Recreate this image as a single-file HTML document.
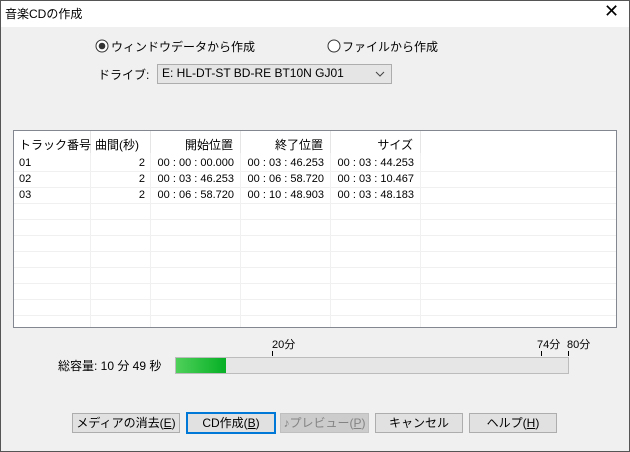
<!DOCTYPE html><html><head><style>
body{margin:0;width:630px;height:452px;background:#f0f0f0;font-family:"Liberation Sans","Noto Sans CJK JP",sans-serif;font-size:12px;color:#000;position:relative;overflow:hidden}
.a{position:absolute;white-space:nowrap}
.btn{position:absolute;top:413px;height:18px;border:1px solid #adadad;background:#e1e1e1;text-align:center;line-height:18px}
.cell{position:absolute;height:16px;line-height:16px}
</style></head><body>
<div class="a" style="left:0;top:0;width:628px;height:26px;background:#fff;border:1px solid #555;border-bottom:none"></div>
<div class="a" style="left:0;top:26px;width:1px;height:426px;background:#555"></div>
<div class="a" style="right:0;top:26px;width:1px;height:426px;background:#555"></div>
<div class="a" style="left:0;bottom:0;width:630px;height:1px;background:#555"></div>
<div class="a" style="left:5px;top:5px">音楽CDの作成</div>
<div class="a" style="left:604px;top:1px;font-size:18px">✕</div>
<svg class="a" style="left:95px;top:39px" width="14" height="14"><circle cx="7" cy="7" r="6" fill="#fff" stroke="#333"/><circle cx="7" cy="7" r="3.3" fill="#333"/></svg>
<div class="a" style="left:111px;top:38px">ウィンドウデータから作成</div>
<svg class="a" style="left:327px;top:39px" width="14" height="14"><circle cx="7" cy="7" r="6" fill="#fff" stroke="#333"/></svg>
<div class="a" style="left:342px;top:38px">ファイルから作成</div>
<div class="a" style="left:98px;top:66px">ドライブ:</div>
<div class="a" style="left:157px;top:64px;width:233px;height:18px;border:1px solid #adadad;background:#e5e5e5"></div>
<div class="a" style="left:162px;top:66px">E: HL-DT-ST BD-RE BT10N GJ01</div>
<svg class="a" style="left:375px;top:71px" width="10" height="6"><path d="M1 1L5 5L9 1" fill="none" stroke="#444"/></svg>
<div class="a" style="left:13px;top:130px;width:602px;height:196px;border:1px solid #828790;background:#fff"></div>
<svg class="a" style="left:14px;top:131px" width="602" height="196">
<g stroke="#f0f0f0"><line x1="76.5" y1="0" x2="76.5" y2="196"/><line x1="136.5" y1="0" x2="136.5" y2="196"/><line x1="226.5" y1="0" x2="226.5" y2="196"/><line x1="316.5" y1="0" x2="316.5" y2="196"/><line x1="406.5" y1="0" x2="406.5" y2="196"/>
<line x1="0" y1="40.5" x2="602" y2="40.5"/><line x1="0" y1="56.5" x2="602" y2="56.5"/><line x1="0" y1="72.5" x2="602" y2="72.5"/><line x1="0" y1="88.5" x2="602" y2="88.5"/><line x1="0" y1="104.5" x2="602" y2="104.5"/><line x1="0" y1="120.5" x2="602" y2="120.5"/><line x1="0" y1="136.5" x2="602" y2="136.5"/><line x1="0" y1="152.5" x2="602" y2="152.5"/><line x1="0" y1="168.5" x2="602" y2="168.5"/><line x1="0" y1="184.5" x2="602" y2="184.5"/></g>
<g stroke="#e5e5e5"><line x1="76.5" y1="0" x2="76.5" y2="22"/><line x1="136.5" y1="0" x2="136.5" y2="22"/><line x1="226.5" y1="0" x2="226.5" y2="22"/><line x1="316.5" y1="0" x2="316.5" y2="22"/><line x1="406.5" y1="0" x2="406.5" y2="22"/></g>
</svg>
<div class="a" style="left:19px;top:136px">トラック番号</div>
<div class="a" style="left:95px;top:136px">曲間(秒)</div>
<div class="a" style="left:150px;top:136px;width:83px;text-align:right">開始位置</div>
<div class="a" style="left:240px;top:136px;width:83px;text-align:right">終了位置</div>
<div class="a" style="left:330px;top:136px;width:83px;text-align:right">サイズ</div>
<div style="font-size:11px">
<div class="cell a" style="left:19px;top:155px">01</div><div class="cell a" style="left:90px;top:155px;width:55px;text-align:right">2</div><div class="cell a" style="left:150px;top:155px;width:84px;text-align:right">00 : 00 : 00.000</div><div class="cell a" style="left:240px;top:155px;width:84px;text-align:right">00 : 03 : 46.253</div><div class="cell a" style="left:330px;top:155px;width:84px;text-align:right">00 : 03 : 44.253</div>
<div class="cell a" style="left:19px;top:171px">02</div><div class="cell a" style="left:90px;top:171px;width:55px;text-align:right">2</div><div class="cell a" style="left:150px;top:171px;width:84px;text-align:right">00 : 03 : 46.253</div><div class="cell a" style="left:240px;top:171px;width:84px;text-align:right">00 : 06 : 58.720</div><div class="cell a" style="left:330px;top:171px;width:84px;text-align:right">00 : 03 : 10.467</div>
<div class="cell a" style="left:19px;top:187px">03</div><div class="cell a" style="left:90px;top:187px;width:55px;text-align:right">2</div><div class="cell a" style="left:150px;top:187px;width:84px;text-align:right">00 : 06 : 58.720</div><div class="cell a" style="left:240px;top:187px;width:84px;text-align:right">00 : 10 : 48.903</div><div class="cell a" style="left:330px;top:187px;width:84px;text-align:right">00 : 03 : 48.183</div>
</div>
<div class="a" style="left:272px;top:336px;font-size:11px">20分</div>
<div class="a" style="left:537px;top:336px;font-size:11px">74分</div>
<div class="a" style="left:567px;top:336px;font-size:11px">80分</div>
<div class="a" style="left:272px;top:351px;width:1px;height:5px;background:#000"></div>
<div class="a" style="left:541px;top:351px;width:1px;height:5px;background:#000"></div>
<div class="a" style="left:568px;top:351px;width:1px;height:5px;background:#000"></div>
<div class="a" style="left:58px;top:357px">総容量: 10 分 49 秒</div>
<div class="a" style="left:175px;top:357px;width:392px;height:15px;border:1px solid #bcbcbc;background:#e6e6e6"></div>
<div class="a" style="left:176px;top:358px;width:50px;height:15px;background:linear-gradient(90deg,#4fd05a,#06b025)"></div>
<div class="btn" style="left:72px;width:106px">メディアの消去(<u>E</u>)</div>
<div class="btn" style="left:186px;width:86px;border:2px solid #0078d7;top:412px;height:18px">CD作成(<u>B</u>)</div>
<div class="btn" style="left:280px;width:87px;border-color:#bfbfbf;background:#ccc;color:#838383">♪プレビュー(<u>P</u>)</div>
<div class="btn" style="left:375px;width:86px">キャンセル</div>
<div class="btn" style="left:469px;width:86px">ヘルプ(<u>H</u>)</div>
</body></html>
